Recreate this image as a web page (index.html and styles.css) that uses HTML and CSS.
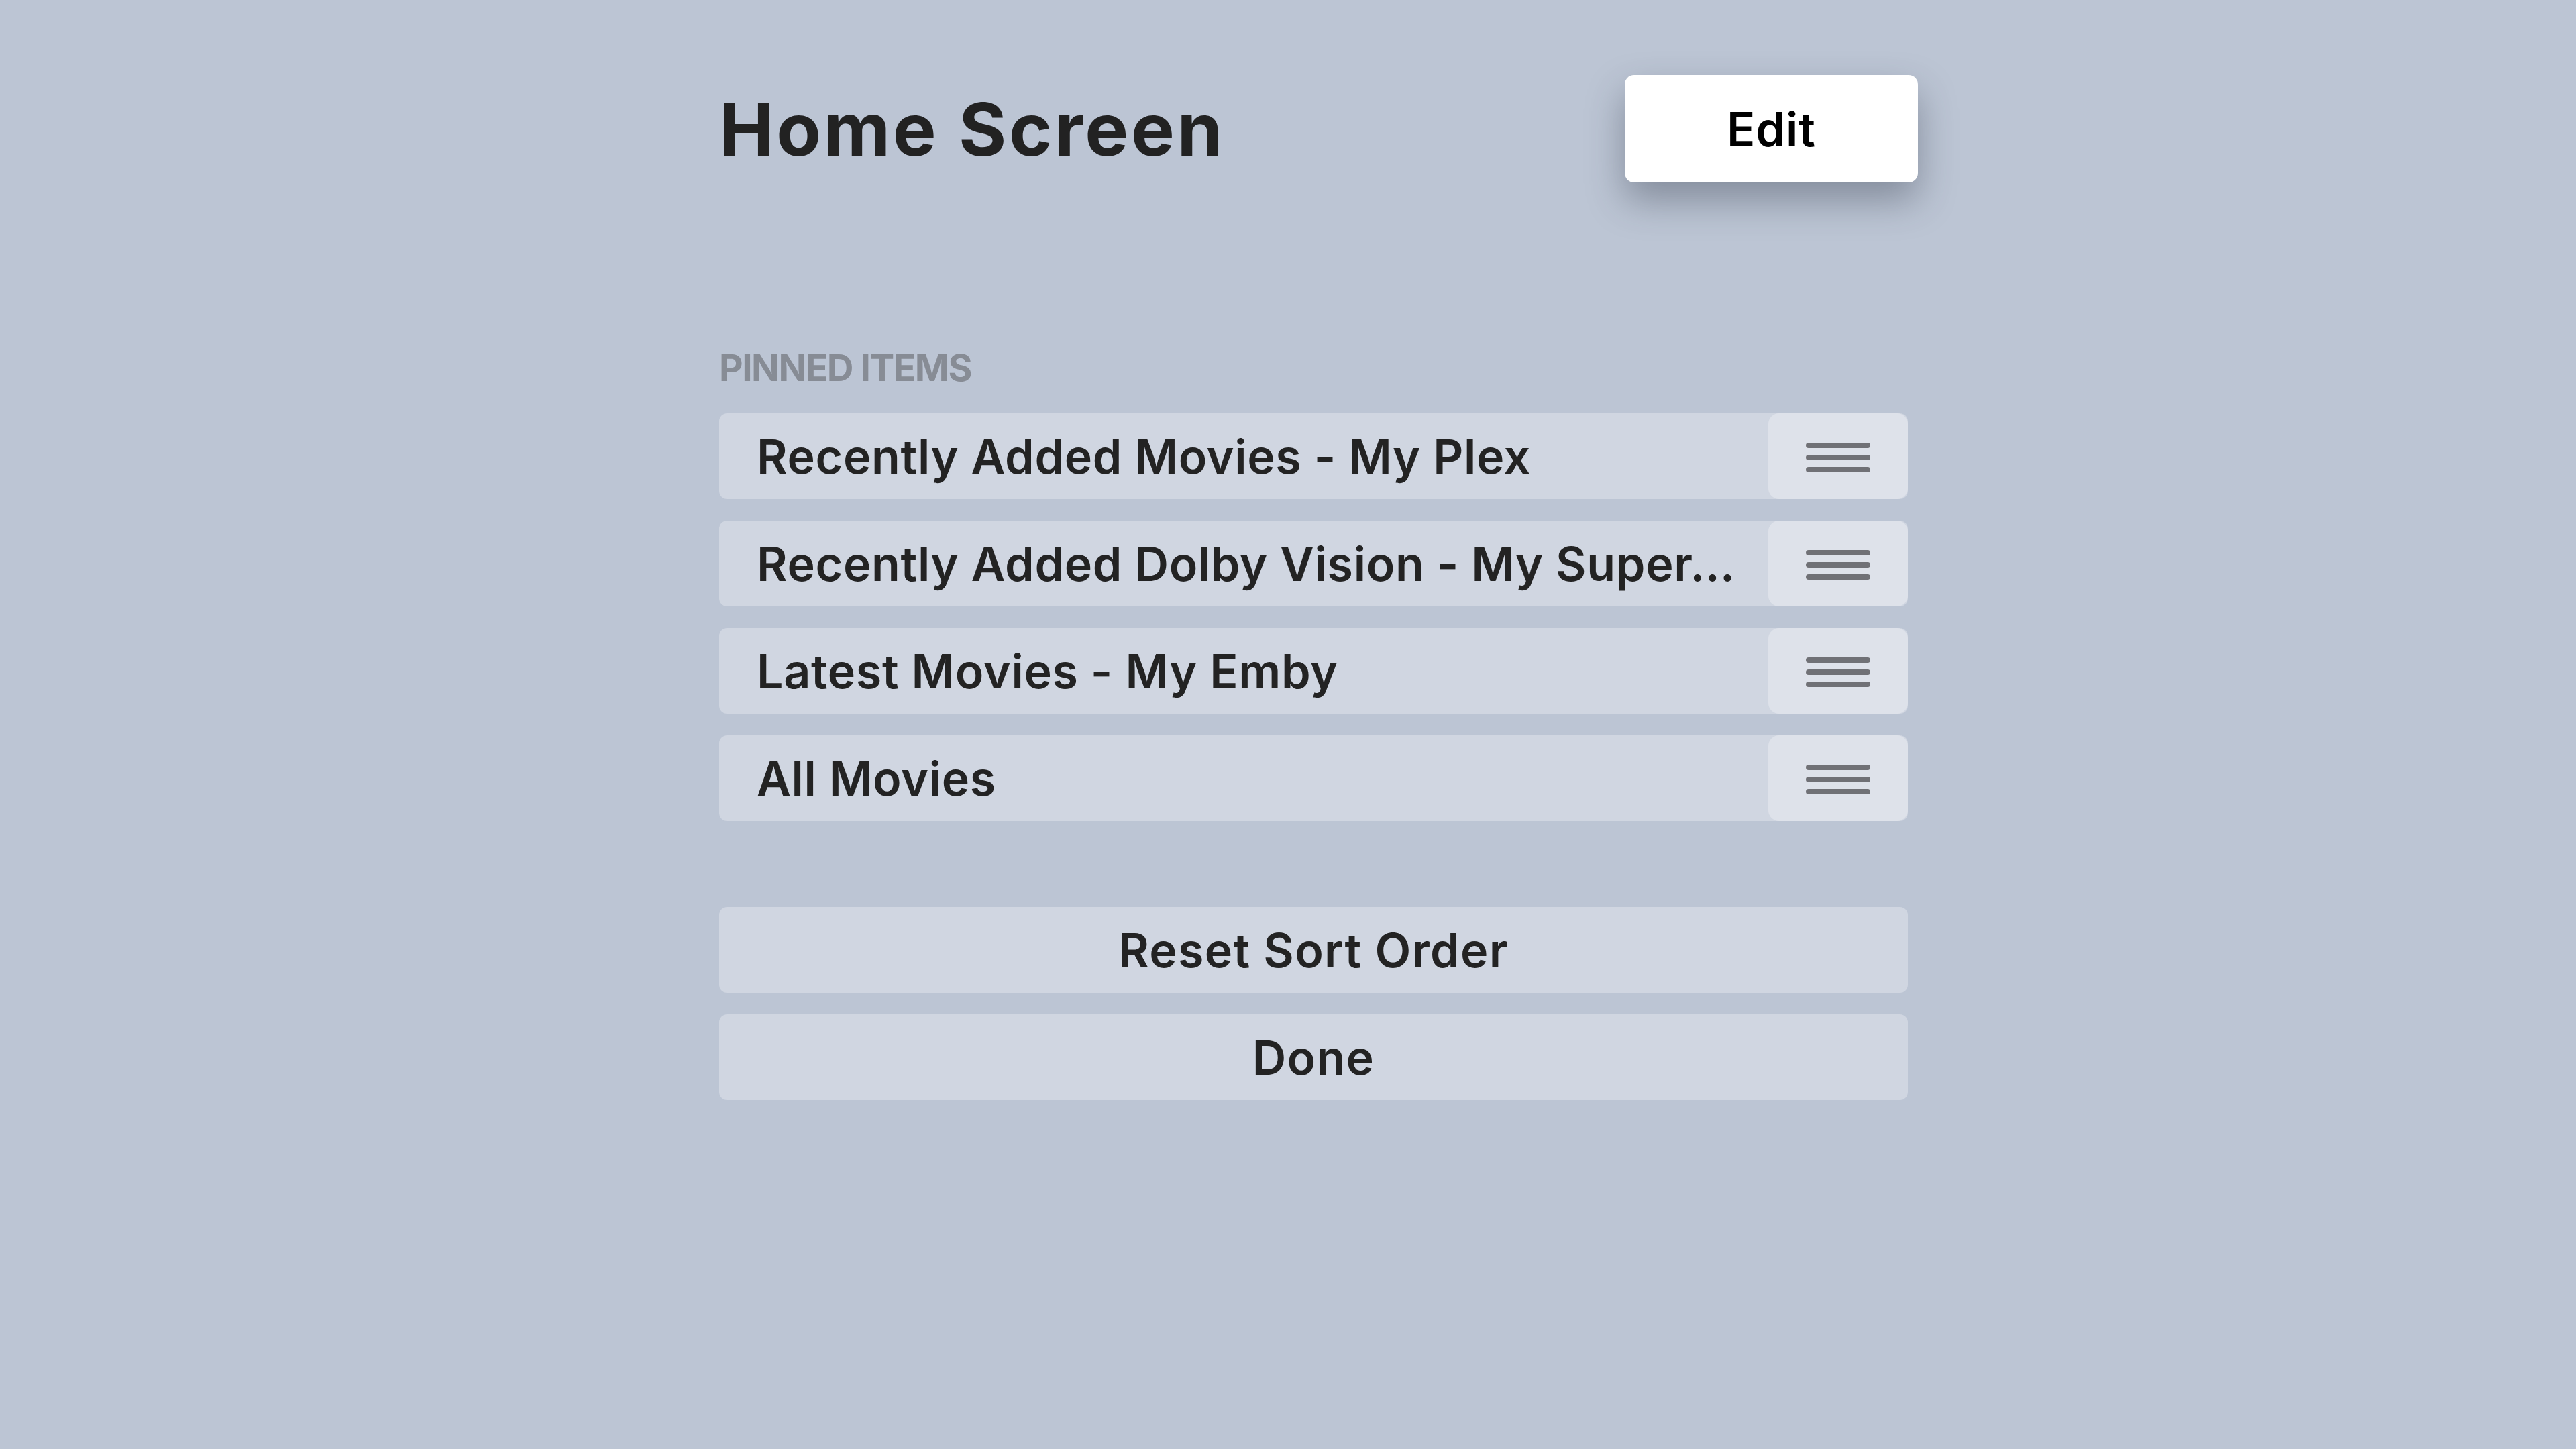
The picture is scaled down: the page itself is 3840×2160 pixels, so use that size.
FILE: index.html
```html
<!DOCTYPE html>
<html lang="en">
<head>
    <meta charset="UTF-8">
    <meta name="viewport" content="width=device-width, initial-scale=1.0">
    <title>Home Screen</title>
    <link rel="stylesheet" href="styles.css">
</head>
<body>
    <main class="screen">
        <header class="header">
            <h1 class="title">Home Screen</h1>
            <button class="edit-btn">Edit</button>
        </header>

        <section class="pinned">
            <h2 class="section-label">PINNED ITEMS</h2>
            <ul class="pinned-list">
                <li class="pinned-row">
                    <span class="row-title">Recently Added Movies - My Plex</span>
                    <span class="handle">
                        <svg width="96" height="44" viewBox="0 0 96 44"><path d="M4 4h88M4 22h88M4 40h88"/></svg>
                    </span>
                </li>
                <li class="pinned-row">
                    <span class="row-title">Recently Added Dolby Vision - My Super…</span>
                    <span class="handle">
                        <svg width="96" height="44" viewBox="0 0 96 44"><path d="M4 4h88M4 22h88M4 40h88"/></svg>
                    </span>
                </li>
                <li class="pinned-row">
                    <span class="row-title">Latest Movies - My Emby</span>
                    <span class="handle">
                        <svg width="96" height="44" viewBox="0 0 96 44"><path d="M4 4h88M4 22h88M4 40h88"/></svg>
                    </span>
                </li>
                <li class="pinned-row">
                    <span class="row-title">All Movies</span>
                    <span class="handle">
                        <svg width="96" height="44" viewBox="0 0 96 44"><path d="M4 4h88M4 22h88M4 40h88"/></svg>
                    </span>
                </li>
            </ul>
        </section>

        <div class="actions">
            <button class="action-btn">Reset Sort Order</button>
            <button class="action-btn">Done</button>
        </div>
    </main>
</body>
</html>
```

FILE: styles.css
```css
body {
    margin: 0;
    min-height: 100vh;
    background-color: #bcc5d4;
    font-family: Inter, "Noto Sans", sans-serif;
    color: #232323;
}
.screen {
    width: 1772px;
    margin-left: 1072px;
    padding-top: 112px;
}
.header {
    display: flex;
    align-items: center;
    justify-content: space-between;
    height: 160px;
}
.title {
    margin: 0;
    font-size: 109px;
    font-weight: 700;
    line-height: 160px;
    letter-spacing: 3.7px;
    color: #222;
}
.edit-btn {
    width: 437px;
    height: 160px;
    margin-right: -15px;
    padding: 0;
    border: none;
    border-radius: 14px;
    background-color: #fff;
    box-shadow: 0 26px 56px rgba(40, 48, 64, 0.38);
    font-family: inherit;
    font-size: 70px;
    font-weight: 600;
    letter-spacing: 1px;
    color: #000;
}
.section-label {
    margin: 243px 0 35px;
    font-size: 55px;
    font-weight: 700;
    line-height: 66px;
    letter-spacing: -1.5px;
    color: #878c95;
}
.pinned-list {
    list-style: none;
    margin: 0;
    padding: 0;
    display: flex;
    flex-direction: column;
    gap: 32px;
}
.pinned-row {
    display: flex;
    align-items: center;
    height: 128px;
    border-radius: 12px;
    background-color: #d0d6e1;
}
.row-title {
    flex: 1;
    min-width: 0;
    padding: 0 40px 0 56px;
    font-size: 70px;
    font-weight: 600;
    letter-spacing: 0.65px;
    white-space: nowrap;
    overflow: hidden;
    text-overflow: ellipsis;
}
.handle {
    flex: none;
    width: 208px;
    height: 128px;
    padding-top: 4px;
    box-sizing: border-box;
    border-radius: 16px;
    background-color: #dee2ea;
    display: flex;
    align-items: center;
    justify-content: center;
}
.handle path {
    stroke: #707176;
    stroke-width: 8;
    stroke-linecap: round;
}
.actions {
    margin-top: 128px;
    display: flex;
    flex-direction: column;
    gap: 32px;
}
.action-btn {
    height: 128px;
    padding: 0;
    border: none;
    border-radius: 12px;
    background-color: #d0d6e1;
    font-family: inherit;
    font-size: 70px;
    font-weight: 600;
    letter-spacing: 1.3px;
    color: #232323;
}
```
